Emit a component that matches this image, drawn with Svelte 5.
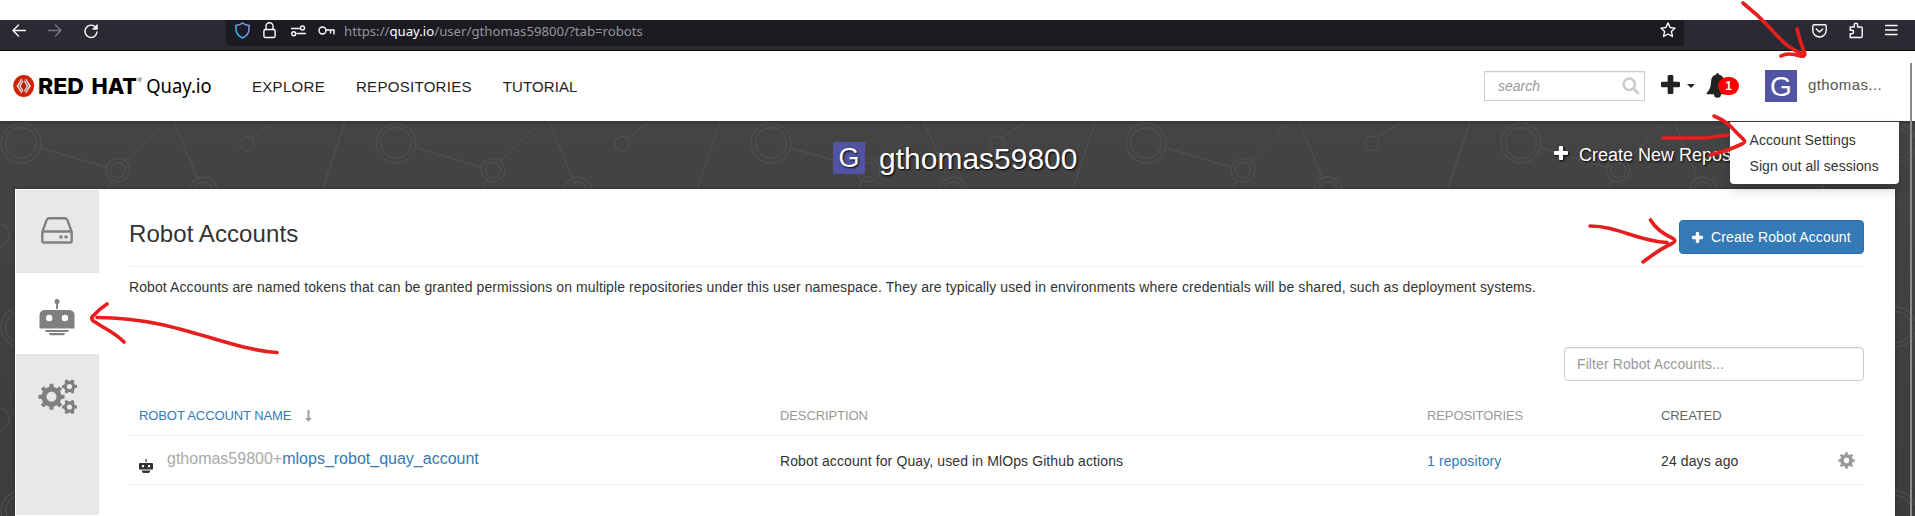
<script>
  const gear = (cx, cy, r, teeth, hole, turn = 0) => {
    const inner = r * 0.77;
    const step = (Math.PI * 2) / teeth;
    let d = '';
    for (let i = 0; i < teeth; i++) {
      const a = i * step + turn - Math.PI / 2;
      const pts = [
        [inner, -0.27],
        [r, -0.19],
        [r, 0.19],
        [inner, 0.27]
      ];
      for (const [rad, f] of pts) {
        const t = a + f * step;
        d += `${d ? 'L' : 'M'}${(cx + rad * Math.cos(t)).toFixed(2)} ${(cy + rad * Math.sin(t)).toFixed(2)}`;
      }
    }
    d += `ZM${cx - hole} ${cy}a${hole} ${hole} 0 1 0 ${hole * 2} 0a${hole} ${hole} 0 1 0 ${-hole * 2} 0Z`;
    return d;
  };
  const nav = ['EXPLORE', 'REPOSITORIES', 'TUTORIAL'];
</script>

{#snippet plus(size)}
  <svg class="plus" width={size} height={size} viewBox="0 0 14 14"><path fill="currentColor" d="M5.9 0h2.2q1 0 1 1v3.9H13q1 0 1 1v2.2q0 1-1 1H9.100V13q0 1-1 1H5.900q-1 0-1-1V9.100H1q-1 0-1-1V5.900q0-1 1-1h3.900V1q0-1 1-1z" /></svg>
{/snippet}

<div class="page">
  <div class="gap"></div>
  <div class="chrome">
    <div class="controls">
      <svg width="14" height="14" viewBox="0 0 14 14" class="ln"><path d="M13.500 6.500H1M6.500 1L1 6.500l5.500 5.500" /></svg>
      <svg width="14" height="14" viewBox="0 0 14 14" class="ln dim"><path d="M.5 6.500H13M7.500 1L13 6.500 7.500 12" /></svg>
      <svg width="15" height="15" viewBox="0 0 15 15" class="ln"><path d="M11.500 3.200A6 6.200 0 1 0 13 8" /><path d="M13.300.8v4.400H8.900z" fill="#fbfbfe" stroke-width=".8" /></svg>
    </div>
    <div class="urlbar">
      <svg width="15" height="17" viewBox="0 0 15 17"><defs><linearGradient id="shield" x1="0" y1="1" x2="1" y2="0"><stop offset="0" stop-color="#20c4f4" /><stop offset="1" stop-color="#a98bf5" /></linearGradient></defs><path d="M7.500 1Q10 3 14 3.500V7q0 6-6.500 9Q1 13 1 7V3.500Q5 3 7.500 1z" fill="none" stroke="url(#shield)" stroke-width="1.500" /></svg>
      <svg width="13" height="17" viewBox="0 0 13 17" class="ln lock"><path d="M3 7.500V4.200a3.500 3.500 0 0 1 7 0v3.300" /><rect x=".9" y="7.500" width="11.200" height="8" rx="1.500" /></svg>
      <svg width="15" height="12" viewBox="0 0 15 12" class="ln perm"><path d="M0 3.500h8.500M6 8.500h8.500" /><circle cx="11.500" cy="3" r="2" /><circle cx="2.700" cy="8.800" r="2" /></svg>
      <svg width="17" height="12" viewBox="0 0 17 12" class="ln key"><circle cx="4.500" cy="5.500" r="3.500" /><path d="M8 5h8v4M12.500 5v3" /></svg>
      <span class="url">https://<b>quay.io</b>/user/gthomas59800/?tab=robots</span>
      <svg width="16" height="16" viewBox="0 0 16 16" class="ln star"><path d="M8 .9l2.100 4.600 5 .6-3.700 3.400 1 5L8 12l-4.400 2.500 1-5L.9 6.100l5-.6z" /></svg>
    </div>
    <div class="tools">
      <svg width="15" height="14" viewBox="0 0 15 14" class="ln"><path d="M2.300.8h10.400q1.500 0 1.500 1.500v4a6.700 6.700 0 0 1-13.400 0v-4q0-1.500 1.500-1.500zM4.300 5l3.200 3 3.200-3" /></svg>
      <svg width="14" height="17" viewBox="0 0 14 17" class="ln"><path d="M1.200 15.500v-3.800h1.700a1.700 1.700 0 0 0 0-3.400H1.200V5h4V3a1.700 1.700 0 0 1 3.400 0v2H12q1.200 0 1.200 1.200v8q0 1.300-1.200 1.300z" /></svg>
      <svg width="13" height="12" viewBox="0 0 13 12" class="ln"><path d="M.5 1.500h11.500M.5 6h11.500M.5 10.500h11.500" /></svg>
    </div>
  </div>

  <header>
    <svg class="logo" width="202" height="26" viewBox="0 0 202 26">
      <ellipse cx="10.700" cy="13" rx="10.500" ry="11" fill="#d31f04" />
      <path d="M8.300 5.500L3.500 13l4.800 7.500 2.200-3L7.700 13l2.800-4.500zM13 5.500L11 8.500 13.700 13 11 17.500l2 3L18 13z" fill="#ddd" />
      <path d="M10.700 9L8.300 13l2.400 4 2.400-4z" fill="#b3200f" />
      <path d="M10 6L5.800 13l4.200 7M11.500 6l4.200 7-4.200 7" fill="none" stroke="#a8483d" stroke-width=".8" />
      <text x="25" y="20.700" class="rh" textLength="46" lengthAdjust="spacingAndGlyphs">RED</text>
      <text x="78.500" y="20.700" class="rh" textLength="45.500" lengthAdjust="spacingAndGlyphs">HAT</text>
      <text x="124.500" y="8.500" class="reg">®</text>
      <text x="133.200" y="20.300" class="quay" textLength="65.500" lengthAdjust="spacingAndGlyphs">Quay.io</text>
    </svg>
    <nav>{#each nav as n}<a>{n}</a>{/each}</nav>
    <div class="search">
      <span>search</span>
      <svg width="18" height="18" viewBox="0 0 18 18"><circle cx="7.300" cy="7.300" r="5.700" fill="none" stroke="#ccc" stroke-width="2.500" /><path d="M11.700 11.700l4.300 4.300" stroke="#ccc" stroke-width="2.800" stroke-linecap="round" /></svg>
    </div>
    <div class="new">{@render plus(19)}<i></i></div>
    <div class="bell">
      <svg width="23" height="25" viewBox="0 0 23 25"><path fill="#222" d="M11.500 0q1.500 0 1.500 1.700 5 1 5 7.300 0 7 4.500 11 0 1.300-1.500 1.300h-6a3.200 3.200 0 0 1-7 0H2Q.5 21.300.5 20 5 16 5 9q0-6.300 5-7.300Q10 0 11.500 0z" /></svg>
      <b>1</b>
    </div>
    <div class="user"><span class="avatar">G</span><span class="name">gthomas...</span></div>
  </header>

  <main>
    <svg class="net" width="1915" height="395">
      <defs>
        <pattern id="mesh" width="375" height="184" patternUnits="userSpaceOnUse">
          <g fill="none" stroke="#525252" stroke-width="1">
            <circle cx="21" cy="22" r="20" /><circle cx="21" cy="22" r="15.500" />
            <circle cx="118" cy="49" r="11.800" /><circle cx="118" cy="49" r="7.500" />
            <circle cx="203" cy="70" r="14" /><circle cx="203" cy="70" r="9" />
            <circle cx="247" cy="22.500" r="7.200" />
            <circle cx="-3" cy="114" r="12" /><circle cx="372" cy="114" r="12" />
            <path d="M41 27l65 19M126 40L168-2M172-4l26 62M252 17L280-2M346-2l-25 75M112 59l-6 14" />
          </g>
        </pattern>
        <linearGradient id="shade" x1="0" y1="0" x2="0" y2="1"><stop offset="0" stop-opacity=".2" /><stop offset="1" stop-opacity="0" /></linearGradient>
      </defs>
      <rect width="1915" height="395" fill="url(#mesh)" />
      <rect width="1915" height="5" fill="url(#shade)" />
    </svg>
    <div class="hero">
      <div class="title"><span class="avatar">G</span><h1>gthomas59800</h1></div>
      <a class="create">{@render plus(14)}<span>Create New Repository</span></a>
      <div class="menu"><a>Account Settings</a><a>Sign out all sessions</a></div>
    </div>

    <div class="panel">
      <aside>
        <div class="tab">
          <svg width="32" height="27" viewBox="0 0 32 27" fill="none" stroke="#808080" stroke-width="2.400"><path d="M1.300 15L5.600 3.200Q6.300 1.300 8.300 1.300h15.400q2 0 2.700 1.900L30.700 15" /><rect x="1.300" y="14.500" width="29.400" height="11" rx="1.500" /><g fill="#808080" stroke="none"><circle cx="20" cy="20" r="1.800" /><circle cx="25" cy="20" r="1.800" /></g></svg>
        </div>
        <div class="tab on">
          <svg width="36" height="37" viewBox="0 0 36 37" fill="#808080"><circle cx="18" cy="2.600" r="2.500" /><path d="M17.100 3h1.900v7h-1.900z" /><path fill-rule="evenodd" d="M5 11h26q4.500 1 4.500 5v13.500H.5V16Q.5 12 5 11zM7 19a3.200 3.200 0 1 0 6.400 0 3.200 3.200 0 1 0-6.400 0zM22.700 19a3.200 3.200 0 1 0 6.400 0 3.200 3.200 0 1 0-6.400 0z" /><path d="M6 31h24q0 2-2 2H8q-2 0-2-2zM10 34h16q0 2.200-2 2.200H12q-2 0-2-2.200z" /></svg>
        </div>
        <div class="tab cogs">
          <svg width="40" height="36" viewBox="0 0 40 36" fill="#808080" fill-rule="evenodd"><path d={gear(13.500, 17.800, 13.200, 8, 5)} /><path d={gear(31.500, 7.500, 7.600, 6, 2.600, 0.52)} /><path d={gear(31.500, 28, 7.600, 6, 2.600, 0.52)} /></svg>
        </div>
        <div class="rest"></div>
      </aside>
      <section>
        <div class="head">
          <h2>Robot Accounts</h2>
          <a class="btn">{@render plus(11)}<span>Create Robot Account</span></a>
        </div>
        <p>Robot Accounts are named tokens that can be granted permissions on multiple repositories under this user namespace. They are typically used in environments where credentials will be shared, such as deployment systems.</p>
        <div class="filter">Filter Robot Accounts...</div>
        <div class="row th">
          <div class="sort">ROBOT ACCOUNT NAME<svg width="7" height="12" viewBox="0 0 7 12"><path d="M2.600 0h1.800v8h2.300L3.500 11.800.3 8h2.300z" fill="#999" /></svg></div>
          <div>DESCRIPTION</div>
          <div>REPOSITORIES</div>
          <div class="created">CREATED</div>
          <div></div>
        </div>
        <div class="row td">
          <div class="acct">
            <svg width="14" height="14" viewBox="0 0 14 14"><path fill="#333" fill-rule="evenodd" d="M6.500 0h1.200v3H6.500zM1 4h12q1 0 1 1v5.500H0V5q0-1 1-1zM3 6v2.200h2V6zM9 6v2.200h2V6zM2.500 11.500h9L10 14H4z" /></svg>
            <span><em>gthomas59800+</em>mlops_robot_quay_account</span>
          </div>
          <div>Robot account for Quay, used in MlOps Github actions</div>
          <div class="link">1 repository</div>
          <div>24 days ago</div>
          <div class="cog"><svg width="17" height="17" viewBox="0 0 17 17"><path fill="#999" fill-rule="evenodd" d={gear(8.500, 8.500, 8.300, 8, 2.700)} /></svg></div>
        </div>
      </section>
    </div>
  </main>
  <div class="scroll"></div>
  <svg class="ink" width="1915" height="516" viewBox="0 0 1915 516">
    <path d="M1743 3Q1758 15 1770 28C1780 39 1788 49 1804 54M1797 29Q1800 42 1805 54Q1805 57 1800 56Q1788 52 1781 56" />
    <path d="M1663 138H1707Q1717 136 1728 135M1714 116Q1728 122 1735 131L1744 140Q1746 142 1742 144Q1727 151 1710 155" />
    <path d="M1590 226C1618 226 1637 241 1667 242.500M1650.500 220Q1657 231 1673 238.500Q1677 241 1672 243.500Q1660 249 1643 262" />
    <path d="M277 352.500C220 348 178 318 97 317.500M107 304Q99 309 92 317Q91 320 95 322C105 329 114 332 124 342" />
  </svg>
</div>

<style>
  :global(body) { margin: 0; }
  * { box-sizing: border-box; }
  .page { position: relative; width: 1915px; height: 516px; overflow: hidden; display: flex; flex-direction: column; font: 14px/20px "Liberation Sans", Arial, sans-serif; color: #333; background: #fff; }
  svg { display: block; flex: none; }
  .gap { height: 20px; flex: none; }
  .chrome { height: 31px; flex: none; display: flex; background: #2b2a33; border-bottom: 1px solid #0c0c0d; }
  .controls { width: 226px; display: flex; gap: 22px; padding: 4px 0 0 12px; }
  .ln { fill: none; stroke: #fbfbfe; stroke-width: 1.400; stroke-linecap: round; stroke-linejoin: round; }
  .dim { stroke: #77767f; }
  .urlbar { width: 1458px; height: 26px; background: #1c1b22; border-radius: 0 0 4px 4px; display: flex; align-items: flex-start; padding: 2px 8px 0 9px; }
  .lock { margin-left: 13px; }
  .perm { margin: 3px 0 0 15px; }
  .key { margin: 3px 0 0 12px; }
  .url { flex: 1; margin: -1px 0 0 9px; font: 13.200px/20px "Noto Sans", sans-serif; color: #96959c; }
  .url b { font-weight: 400; color: #fbfbfe; }
  .tools { display: flex; gap: 22px; padding: 2px 0 0 128px; }
  .tools svg:nth-child(1) { margin-top: 2px; }
  .tools svg:nth-child(3) { margin-top: 2px; }

  header { height: 70px; flex: none; display: flex; align-items: flex-start; padding-left: 13px; background: #fff; }
  .logo { margin-top: 22px; }
  .rh { font: 800 21.300px Inter, sans-serif; fill: #000; }
  .reg { font: 6px "Liberation Sans", sans-serif; }
  .quay { font: 19.500px "Noto Sans", sans-serif; fill: #000; }
  nav { display: flex; gap: 31px; margin: 25px 0 0 37px; font-size: 15px; letter-spacing: .3px; width: 1232px; color: #222; }
  nav a { line-height: 22px; }
  nav a:last-child { letter-spacing: .1px; }
  .search { width: 161px; height: 30px; margin-top: 20px; border: 1px solid #ccc; box-shadow: inset 0 1px 1px #0001; display: flex; align-items: center; justify-content: space-between; padding: 0 4px 0 13px; font-style: italic; color: #999; }
  .new { display: flex; margin: 24px 0 0 16px; gap: 7px; color: #222; }
  .new i { width: 0; height: 0; margin-top: 9px; border: 4px solid transparent; border-top-color: #222; border-bottom: 0; }
  .bell { display: flex; margin: 22px 0 0 11px; }
  .bell b { width: 21px; height: 18px; margin: 4px 0 0 -11px; border-radius: 9px; background: red; color: #fff; font-size: 12px; line-height: 18px; text-align: center; position: relative; }
  .user { display: flex; margin: 19px 0 0 26px; }
  .avatar { width: 32px; height: 32px; background: #5254a3; color: #fff; font-size: 28px; line-height: 33px; text-align: center; }
  .name { margin-left: 11px; line-height: 30px; font-size: 15px; letter-spacing: .4px; color: #555; }

  main { flex: 1; position: relative; background: linear-gradient(#444, #3c3c3c); }
  .net { position: absolute; left: 0; top: 0; }
  .hero { position: relative; height: 68px; color: #fff; text-shadow: 1px 1px 2px #000; display: flex; }
  .title { display: flex; width: 721px; margin: 21px 0 0 833px; }
  .title .avatar { font-size: 27px; }
  h1 { font-size: 30px; font-weight: 400; line-height: 33px; margin: 0 0 0 14px; }
  .create { display: flex; margin-top: 25px; height: 20px; font-size: 18px; line-height: 19px; white-space: nowrap; gap: 11px; }
  .create svg { filter: drop-shadow(1px 1px 1px #000); }
  .menu { position: absolute; left: 1730px; top: 1px; width: 169px; height: 62px; z-index: 2; background: #fff; color: #333; text-shadow: none; border-radius: 0 0 4px 4px; box-shadow: 0 6px 12px rgba(0, 0, 0, .175); padding: 5px 0 0 19.500px; display: flex; flex-direction: column; letter-spacing: .08px; }
  .menu a { line-height: 26px; white-space: nowrap; }

  .panel { position: relative; margin: 0 20px 0 15px; width: 1880px; height: 327px; background: #fff; display: flex; box-shadow: 0 0 3px #0006; }
  aside { width: 84px; padding: 1px 0 1px 1px; display: flex; flex-direction: column; }
  .tab { height: 82.500px; flex: none; background: #e8e8e8; border: 1px solid #dde4ec; border-width: 0 1px 1px 0; display: flex; justify-content: center; align-items: center; }
  .tab.on { background: #fff; border-right-color: #fff; padding-top: 8px; }
  .cogs { padding: 2px 0 0 1px; }
  .rest { flex: 1; background: #e8e8e8; border-right: 1px solid #dde4ec; }
  section { width: 1735px; margin-left: 30px; display: flex; flex-direction: column; }
  .head { height: 78px; flex: none; display: flex; justify-content: space-between; border-bottom: 1px solid #eee; }
  h2 { margin: 31px 0 0; font-size: 24px; font-weight: 400; line-height: 28px; letter-spacing: .08px; }
  .btn { width: 185px; height: 34px; margin-top: 31px; display: flex; align-items: center; gap: 8px; padding-left: 12px; background: #337ab7; border: 1px solid #2e6da4; border-radius: 4px; color: #fff; letter-spacing: .14px; white-space: nowrap; }
  p { margin: 10px 0 0; white-space: nowrap; letter-spacing: .098px; }
  .filter { align-self: flex-end; width: 300px; height: 34px; margin-top: 50px; border: 1px solid #ccc; border-radius: 4px; box-shadow: inset 0 1px 1px rgba(0, 0, 0, .075); padding: 0 12px; line-height: 33px; color: #999; letter-spacing: .1px; }
  .row { display: grid; grid-template-columns: 641px 647px 234px 177px 1fr; padding-left: 10px; border-bottom: 1px solid #eee; }
  .th { height: 55px; padding-top: 25px; font-size: 13px; line-height: 19px; color: #999; letter-spacing: -.1px; }
  .sort { display: flex; color: #337ab7; }
  .sort svg { margin: 4px 0 0 14px; }
  .created { color: #666; }
  .td { height: 49px; line-height: 20px; padding-top: 15px; letter-spacing: .11px; }
  .acct { display: flex; font-size: 16px; line-height: 16px; color: #337ab7; letter-spacing: 0; }
  .acct svg { margin: 8px 14px 0 0; }
  .acct em { font-style: normal; color: #aaa; }
  .link { color: #337ab7; }
  .cog { padding: 1px 0 0; }
  .scroll { position: absolute; left: 1910px; top: 63px; width: 2px; height: 453px; background: #8b8b8b; z-index: 3; }
  .ink { position: absolute; left: 0; top: 0; z-index: 4; fill: none; stroke: #e81e1e; stroke-width: 3.600; stroke-linecap: round; stroke-linejoin: round; pointer-events: none; }
</style>
